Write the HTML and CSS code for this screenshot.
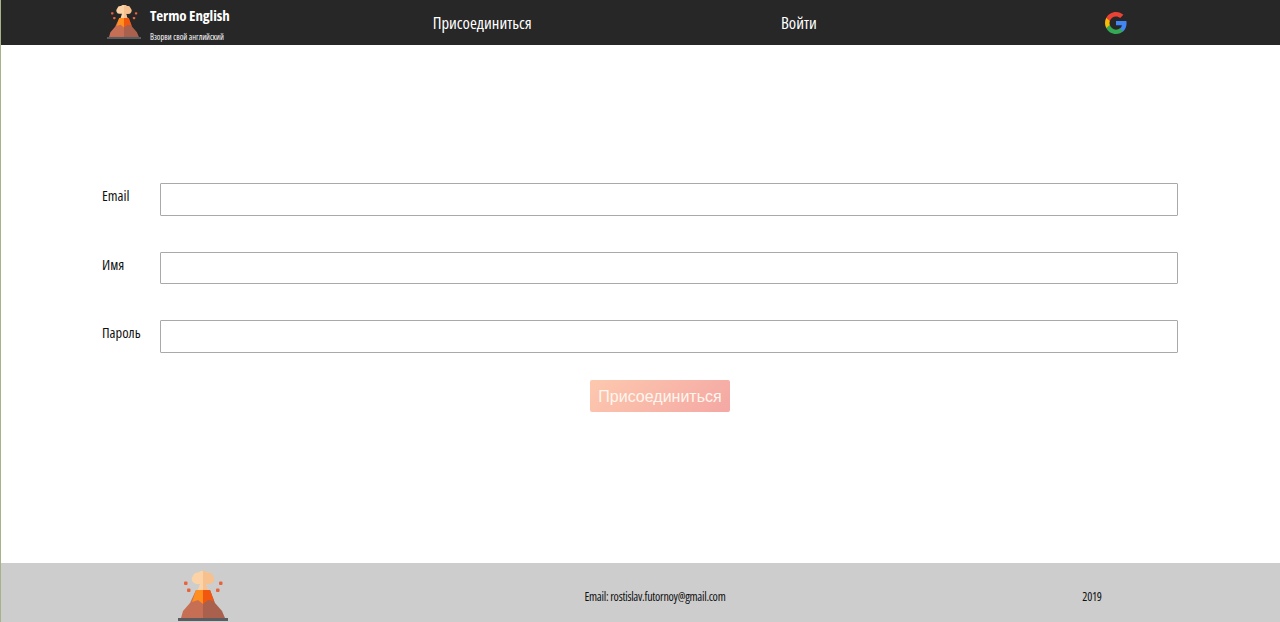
FILE: index.html
```html
<!DOCTYPE html>
<html lang="ru">
<head>
<meta charset="utf-8">
<title>Termo English</title>
<link rel="stylesheet" href="styles.css">
</head>
<body>
<svg class="defs" width="0" height="0" aria-hidden="true">
  <symbol id="volcano" viewBox="0 0 50 50">
    <path fill="#fcd3a6" d="M20 19l2-6h-3.500a4.800 4.800 0 0 1-3.500-8 5 5 0 0 1 5.500-3.500 5.500 5.500 0 0 1 8 0 5 5 0 0 1 5.500 3.500 4.800 4.800 0 0 1-3.500 8H28l2 6z"/>
    <path fill="#f6c08f" d="M25 0a5.500 5.500 0 0 1 4.500 1.500 5 5 0 0 1 5.500 3.500 4.800 4.800 0 0 1-3.500 8H28l2 6h-5z"/>
    <g fill="#e8633a">
      <rect x="6" y="10.500" width="3.500" height="3.500" rx="1"/>
      <rect x="9" y="17.500" width="3.500" height="3.500" rx="1"/>
      <rect x="41" y="10.500" width="3.500" height="3.500" rx="1"/>
      <rect x="38" y="17.500" width="3.500" height="3.500" rx="1"/>
    </g>
    <path fill="#c66f55" d="M18 19h7v28H3l2-7 7-8z"/>
    <path fill="#a9604c" d="M25 19h7l5 13 7 8 3 7H25z"/>
    <path fill="#ff8f1f" d="M18 19h7v14l-5-4-6 2z"/>
    <path fill="#f2570f" d="M25 19h7l4 11-6-1-5 4z"/>
    <rect fill="#5b5b60" x="0" y="47" width="50" height="3"/>
  </symbol>
</svg>

<header class="topbar">
  <a class="brand" href="#">
    <svg class="brand-logo"><use href="#volcano"/></svg>
    <span class="brand-text">
      <span class="brand-name">Termo English</span>
      <span class="brand-tag">Взорви свой английский</span>
    </span>
  </a>
  <a class="nav-link" href="#">Присоединиться</a>
  <a class="nav-link" href="#">Войти</a>
  <a class="google" href="#" aria-label="Google">
    <svg class="google-icon" viewBox="0 0 24 24">
      <path fill="#4285F4" d="M22.560 12.250c0-.780-.070-1.530-.200-2.250H12v4.260h5.920c-.260 1.370-1.040 2.530-2.210 3.310v2.770h3.570c2.080-1.920 3.280-4.740 3.280-8.090z"/>
      <path fill="#34A853" d="M12 23c2.970 0 5.460-.980 7.280-2.660l-3.570-2.770c-.980.660-2.230 1.060-3.710 1.060-2.860 0-5.290-1.930-6.160-4.530H2.180v2.840C3.990 20.530 7.700 23 12 23z"/>
      <path fill="#FBBC05" d="M5.840 14.090c-.220-.660-.350-1.360-.350-2.090s.130-1.430.350-2.090V7.070H2.180C1.430 8.550 1 10.220 1 12s.430 3.450 1.180 4.930l3.660-2.840z"/>
      <path fill="#EA4335" d="M12 5.380c1.620 0 3.060.560 4.210 1.640l3.150-3.150C17.450 2.090 14.970 1 12 1 7.700 1 3.990 3.470 2.180 7.070l3.660 2.840c.870-2.600 3.300-4.530 6.160-4.530z"/>
    </svg>
  </a>
</header>

<main class="content">
  <form class="signup">
    <label class="field">
      <span class="field-label">Email</span>
      <input class="field-input" type="email">
    </label>
    <label class="field">
      <span class="field-label">Имя</span>
      <input class="field-input" type="text">
    </label>
    <label class="field">
      <span class="field-label">Пароль</span>
      <input class="field-input" type="password">
    </label>
    <button class="submit" type="button">Присоединиться</button>
  </form>
</main>

<footer class="footer">
  <svg class="footer-logo"><use href="#volcano"/></svg>
  <span class="footer-text">Email: rostislav.futornoy@gmail.com</span>
  <span class="footer-text">2019</span>
</footer>
</body>
</html>
```

FILE: styles.css
```css
* { box-sizing: border-box; }

html, body { height: 100%; }

body {
  margin: 0;
  height: 622px;
  overflow: hidden;
  display: flex;
  flex-direction: column;
  background: #fff;
  border-left: 1px solid #a8b08c;
  font-family: "Open Sans", "Noto Sans", sans-serif;
  font-stretch: 75%;
  color: #111;
}

.defs { display: block; height: 0; }

a { color: inherit; text-decoration: none; }

.topbar {
  flex: none;
  height: 44.500px;
  margin-left: -1px;
  padding: 0 6px 0 7px;
  display: grid;
  grid-template-columns: repeat(4, 1fr);
  align-items: center;
  justify-items: center;
  background: #272727;
  color: #fff;
}

.brand {
  justify-self: start;
  margin-left: 100px;
  display: flex;
  align-items: center;
  gap: 9px;
  height: 44px;
}

.brand-logo { width: 34px; height: 34px; }

.brand-text {
  display: flex;
  flex-direction: column;
  gap: 7px;
  padding-top: 3px;
}

.brand-name { font-size: 15px; font-weight: 700; line-height: 20px; letter-spacing: -.1px; }
.brand-tag { font-size: 8.400px; line-height: 10px; }

.nav-link { font-size: 16.700px; }

.google { display: flex; padding-top: 1px; }
.google-icon { width: 24px; height: 24px; }

.content { flex: 1; padding: 138.500px 0 0 101px; }

.signup {
  width: 1116px;
  display: flex;
  flex-direction: column;
  gap: 36px;
}

.field { display: flex; align-items: flex-start; height: 32.500px; }

.field-label {
  width: 58px;
  font-size: 14.500px;
  line-height: 26px;
}

.field-input {
  width: 1018px;
  height: 32.500px;
  border: 1px solid #a9a9a9;
  border-radius: 1px;
  background: #fff;
}

.submit {
  align-self: center;
  width: 140px;
  height: 32px;
  margin-top: -8.500px;
  padding: 1px 0 0;
  border: 0;
  border-radius: 2px;
  background: linear-gradient(135deg, #fdc8ae, #f4a8a4);
  color: #fff6ee;
  font-family: "Liberation Sans", sans-serif;
  font-stretch: normal;
  font-size: 16px;
}

.footer {
  flex: none;
  height: 59px;
  margin-left: -1px;
  display: grid;
  grid-template-columns: 406px 498px 1fr;
  align-items: center;
  justify-items: center;
  background: #cdcdcd;
}

.footer-logo { width: 50px; height: 50px; margin-top: 7px; }

.footer-text { font-size: 12px; letter-spacing: -.27px; margin-top: 7px; }
```
